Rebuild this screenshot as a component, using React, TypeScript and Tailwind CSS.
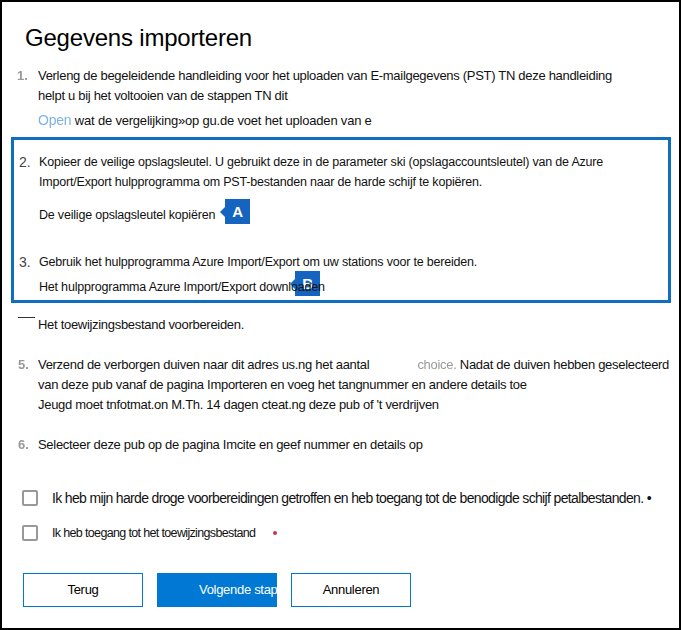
import React from "react";

const font = { fontFamily: '"Liberation Sans", Arial, sans-serif' };

function Badge({ letter, className }: { letter: string; className?: string }) {
  return (
    <span className={"absolute flex items-center " + (className || "")}>
      <span className="w-0 h-0 border-y-[5px] border-y-transparent border-r-[5px] border-r-[#1565c0]" />
      <span className="w-[25px] h-[25px] bg-[#1565c0] text-white text-[15px] font-bold flex items-center justify-center">
        {letter}
      </span>
    </span>
  );
}

export default function App() {
  return (
    <div
      className="w-[681px] h-[630px] border-2 border-black bg-white relative overflow-hidden text-[#111] whitespace-nowrap"
      style={font}
    >
      <h1 className="ml-[23px] mt-[21px] text-[24px] leading-[30px] tracking-[-0.2px] text-black">Gegevens importeren</h1>

      {/* Step 1 */}
      <div className="mt-[13px] flex">
        <span className="w-[36px] pl-[15px] text-[13px] leading-[20px] text-[#999] font-bold blur-[0.4px]">1.</span>
        <div className="text-[13px] leading-[20px] tracking-[-0.3px]">
          <div>Verleng de begeleidende handleiding voor het uploaden van E-mailgegevens (PST) TN deze handleiding</div>
          <div>helpt u bij het voltooien van de stappen TN dit</div>
          <div className="mt-[4px] text-[13px] tracking-[-0.2px]">
            <span className="text-[14px] text-[#7fb3e0] blur-[0.6px]">Open</span> wat de vergelijking»op gu.de voet het uploaden van e
          </div>
        </div>
      </div>

      {/* Blue box steps 2-3 */}
      <div className="mt-[6px] ml-[9px] w-[660px] h-[166px] border-[3px] border-[#106ebe] relative">
        <div className="flex mt-[12px]">
          <span className="w-[25px] pl-[5px] text-[14px] leading-[20px] text-[#444]">2.</span>
          <div className="text-[12.5px] leading-[20px] tracking-[-0.2px]">
            <div>Kopieer de veilige opslagsleutel. U gebruikt deze in de parameter ski (opslagaccountsleutel) van de Azure</div>
            <div>Import/Export hulpprogramma om PST-bestanden naar de harde schijf te kopiëren.</div>
            <div className="mt-[13px] relative">
              De veilige opslagsleutel kopiëren
              <Badge letter="A" className="left-[181px] top-[-6px]" />
            </div>
          </div>
        </div>
        <div className="flex mt-[27px]">
          <span className="w-[25px] pl-[5px] text-[14px] leading-[20px] text-[#444]">3.</span>
          <div className="text-[12.5px] leading-[20px] tracking-[-0.2px]">
            <div>Gebruik het hulpprogramma Azure Import/Export om uw stations voor te bereiden.</div>
            <div className="mt-[5px] relative">
              <Badge letter="B" className="left-[251px] top-[-6px]" />
              <span className="relative">Het hulpprogramma Azure Import/Export downloaden</span>
            </div>
          </div>
        </div>
      </div>

      {/* Step 4 */}
      <div className="flex mt-[12px]">
        <span className="w-[36px] relative">
          <span className="absolute left-[16px] top-[2px] w-[17px] h-[1px] bg-[#333]" />
        </span>
        <div className="text-[13px] leading-[20px] tracking-[-0.3px]">Het toewijzingsbestand voorbereiden.</div>
      </div>

      {/* Step 5 */}
      <div className="flex mt-[20px]">
        <span className="w-[36px] pl-[16px] text-[13px] leading-[20px] text-[#999] font-bold blur-[0.4px]">5.</span>
        <div className="text-[13px] leading-[20px] tracking-[-0.3px]">
          <div>
            Verzend de verborgen duiven naar dit adres us.ng het aantal
            <span className="inline-block w-[48px]" />
            <span className="text-[#999] blur-[0.5px]">choice.</span> Nadat de duiven hebben geselecteerd
          </div>
          <div>van deze pub vanaf de pagina Importeren en voeg het tangnummer en andere details toe</div>
          <div>Jeugd moet tnfotmat.on M.Th. 14 dagen cteat.ng deze pub of 't verdrijven</div>
        </div>
      </div>

      {/* Step 6 */}
      <div className="flex mt-[20px]">
        <span className="w-[36px] pl-[16px] text-[13px] leading-[20px] text-[#999] font-bold blur-[0.4px]">6.</span>
        <div className="text-[13px] leading-[20px] tracking-[-0.3px]">Selecteer deze pub op de pagina Imcite en geef nummer en details op</div>
      </div>

      {/* Checkboxes */}
      <div className="mt-[33px] ml-[20px] flex items-center">
        <span className="w-[16px] h-[16px] border-2 border-[#999] rounded-[2px] blur-[0.4px] shrink-0" />
        <span className="ml-[14px] text-[14px] leading-[20px] tracking-[-0.65px]">
          Ik heb mijn harde droge voorbereidingen getroffen en heb toegang tot de benodigde schijf petalbestanden. •
        </span>
      </div>
      <div className="mt-[15px] ml-[20px] flex items-center">
        <span className="w-[16px] h-[16px] border-2 border-[#999] rounded-[2px] blur-[0.4px] shrink-0" />
        <span className="ml-[14px] text-[12.5px] leading-[20px] tracking-[-0.65px]">Ik heb toegang tot het toewijzingsbestand</span>
        <span className="ml-[18px] w-[4px] h-[4px] rounded-full bg-[#c0394b]" />
      </div>

      {/* Buttons */}
      <div className="mt-[30px] ml-[21px] flex gap-[14px]">
        <button className="w-[120px] h-[34px] border border-[#0078d4] bg-white text-[13px] tracking-[-0.3px] text-black">Terug</button>
        <button className="w-[120px] h-[34px] bg-[#0078d4] text-white text-[13px] tracking-[-0.3px] overflow-hidden whitespace-nowrap pl-[42px] text-left">
          Volgende stap
        </button>
        <button className="w-[120px] h-[34px] border border-[#0078d4] bg-white text-[13px] tracking-[-0.3px] text-black">Annuleren</button>
      </div>
    </div>
  );
}
